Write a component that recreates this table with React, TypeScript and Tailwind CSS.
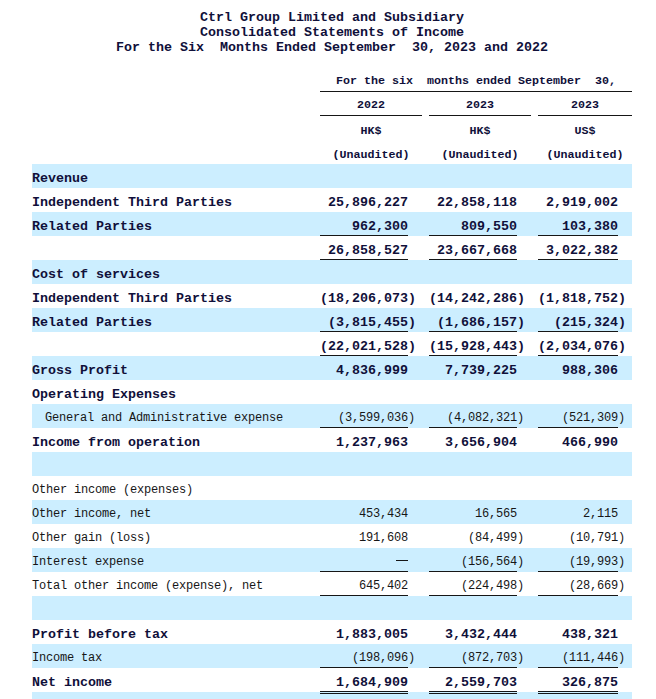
type Row = {
  label: string;
  bold?: boolean;
  indent?: boolean;
  vals?: [string, string, string];
  line?: 'single' | 'double';
};

const rows: Row[] = [
  { label: 'Revenue', bold: true },
  { label: 'Independent Third Parties', bold: true, vals: ['25,896,227', '22,858,118', '2,919,002'] },
  { label: 'Related Parties', bold: true, vals: ['962,300', '809,550', '103,380'], line: 'single' },
  { label: '', bold: true, vals: ['26,858,527', '23,667,668', '3,022,382'], line: 'single' },
  { label: 'Cost of services', bold: true },
  { label: 'Independent Third Parties', bold: true, vals: ['(18,206,073)', '(14,242,286)', '(1,818,752)'] },
  { label: 'Related Parties', bold: true, vals: ['(3,815,455)', '(1,686,157)', '(215,324)'], line: 'single' },
  { label: '', bold: true, vals: ['(22,021,528)', '(15,928,443)', '(2,034,076)'], line: 'single' },
  { label: 'Gross Profit', bold: true, vals: ['4,836,999', '7,739,225', '988,306'] },
  { label: 'Operating Expenses', bold: true },
  { label: 'General and Administrative expense', indent: true, vals: ['(3,599,036)', '(4,082,321)', '(521,309)'], line: 'single' },
  { label: 'Income from operation', bold: true, vals: ['1,237,963', '3,656,904', '466,990'] },
  { label: '' },
  { label: 'Other income (expenses)' },
  { label: 'Other income, net', vals: ['453,434', '16,565', '2,115'] },
  { label: 'Other gain (loss)', vals: ['191,608', '(84,499)', '(10,791)'] },
  { label: 'Interest expense', vals: ['-', '(156,564)', '(19,993)'], line: 'single' },
  { label: 'Total other income (expense), net', vals: ['645,402', '(224,498)', '(28,669)'], line: 'single' },
  { label: '' },
  { label: 'Profit before tax', bold: true, vals: ['1,883,005', '3,432,444', '438,321'] },
  { label: 'Income tax', vals: ['(198,096)', '(872,703)', '(111,446)'], line: 'single' },
  { label: 'Net income', bold: true, vals: ['1,684,909', '2,559,703', '326,875'], line: 'double' },
  { label: '' },
];

// cell width + right padding per column (value box = width - padding)
const valueCols = ['w-[109px] pr-[21px]', 'w-[109px] pr-[21px]', 'w-[94px] pr-[14px]'];
const headCols = ['w-[109px] pr-[7px]', 'w-[109px] pr-[7px]', 'w-[94px]'];

const boldText = 'font-bold text-[13.33px] text-[#10103a]';
const regText = 'text-[12px] tracking-[-0.2px] text-[#161616]';

const Num = ({ v }: { v: string }) => {
  if (v === '-') {
    return <span className="inline-block w-[12px] border-t border-[#161616] align-[4px]" />;
  }
  if (v.endsWith(')')) {
    // closing paren hangs past the column edge
    return (
      <>
        {v.slice(0, -1)}
        <span className="inline-block w-0">)</span>
      </>
    );
  }
  return <>{v}</>;
};

const HeadRow = ({ cells, pt, line }: { cells: string[]; pt: string; line?: boolean }) => (
  <div className="flex h-[24px]">
    <div className="w-[288px]" />
    {cells.map((c, i) => (
      <div key={i} className={`${headCols[i]} h-full`}>
        <div className={`h-full text-center ${pt} leading-[18px] ${line ? 'border-b border-[#161616]' : ''}`}>
          {c}
        </div>
      </div>
    ))}
  </div>
);

export default function App() {
  return (
    <div className="w-[656px] h-[699px] overflow-hidden bg-white font-['Liberation_Mono',monospace]">
      <div className="ml-[32px] w-[600px]">
        {/* Title */}
        <div className={`pt-[10px] text-center leading-[15px] whitespace-pre ${boldText}`}>
          <div>Ctrl Group Limited and Subsidiary</div>
          <div>Consolidated Statements of Income</div>
          <div>For the Six  Months Ended September  30, 2023 and 2022</div>
        </div>

        {/* Column headings */}
        <div className="mt-[13px] font-bold text-[11.67px] text-[#10103a] whitespace-pre">
          <div className="flex h-[24px]">
            <div className="w-[288px]" />
            <div className="w-[312px] h-full border-b border-[#161616] text-center pt-[4px] leading-[18px]">
              For the six  months ended September  30,
            </div>
          </div>
          <HeadRow cells={['2022', '2023', '2023']} pt="pt-[4px]" line />
          <HeadRow cells={['HK$', 'HK$', 'US$']} pt="pt-[6px]" />
          <HeadRow cells={['(Unaudited)', '(Unaudited)', '(Unaudited)']} pt="pt-[6px]" />
        </div>

        {/* Body */}
        <div>
          {rows.map((r, idx) => (
            <div
              key={idx}
              className={`flex h-[24px] whitespace-nowrap ${idx % 2 === 0 ? 'bg-[#cceeff]' : ''} ${r.bold ? boldText : regText}`}
            >
              <div className={`w-[288px] h-full pt-[5px] leading-[19px] ${r.indent ? 'pl-[13px]' : ''}`}>{r.label}</div>
              {r.vals &&
                r.vals.map((v, i) => (
                  <div key={i} className={`${valueCols[i]} h-full`}>
                    <div
                      className={`relative h-full pt-[5px] leading-[19px] text-right ${r.line === 'single' ? 'border-b border-[#161616]' : ''}`}
                    >
                      <Num v={v} />
                      {r.line === 'double' && (
                        <span className="absolute left-0 right-0 bottom-[-2px] h-[3px] border-y border-[#161616]" />
                      )}
                    </div>
                  </div>
                ))}
            </div>
          ))}
        </div>
      </div>
    </div>
  );
}
